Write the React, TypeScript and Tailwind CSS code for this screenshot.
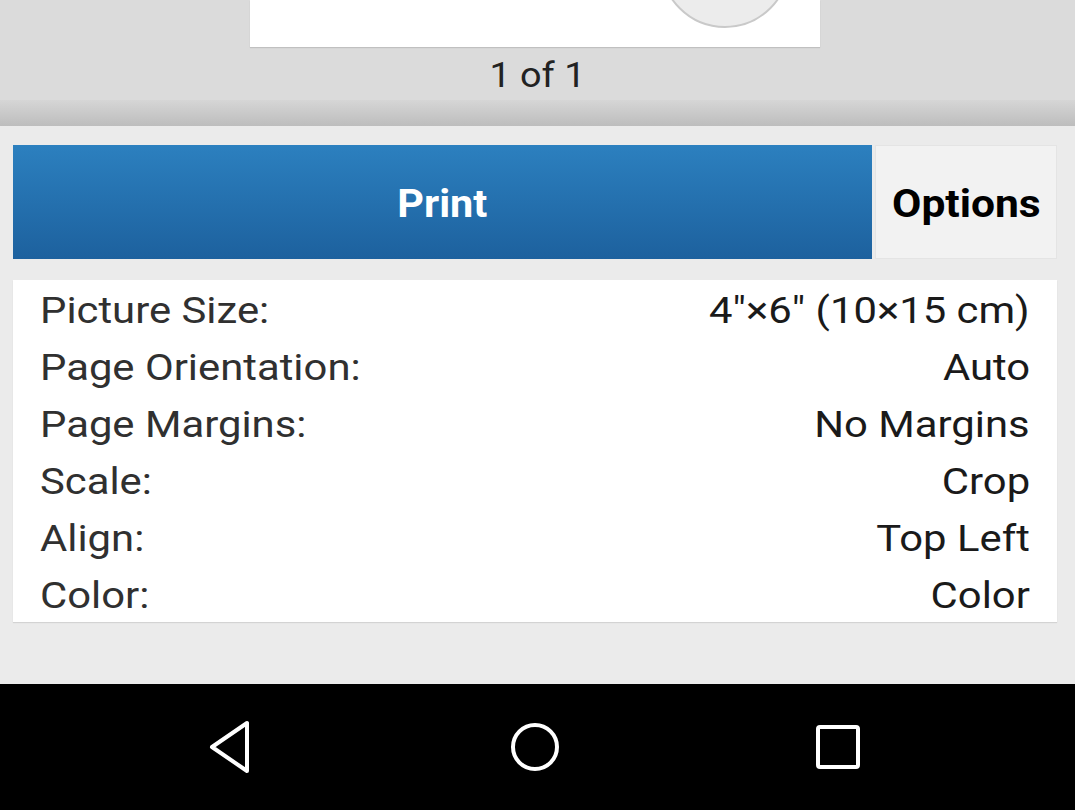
import React from "react";

const rows: [string, string][] = [
  ["Picture Size:", '4"×6" (10×15 cm)'],
  ["Page Orientation:", "Auto"],
  ["Page Margins:", "No Margins"],
  ["Scale:", "Crop"],
  ["Align:", "Top Left"],
  ["Color:", "Color"],
];

export default function App() {
  return (
    <div
      className="w-[1075px] h-[810px] overflow-hidden flex flex-col bg-[#ebebeb]"
      style={{ fontFamily: "Roboto, 'Liberation Sans', sans-serif" }}
    >
      {/* Preview area */}
      <div className="h-[100px] bg-[#dbdbdb] flex flex-col items-center shrink-0">
        <div className="relative w-[570px] h-[47px] bg-white overflow-hidden shadow-[0_1px_1px_rgba(0,0,0,0.12)] ml-[-5px]">
          <div className="absolute left-[410px] top-[-102px] w-[130px] h-[130px] rounded-full bg-[#ececec] border-2 border-[#c9c9c9]" />
        </div>
        <div className="mt-[9px] text-[35px] leading-[40px] text-[#222] scale-x-[1.08]">1 of 1</div>
      </div>
      <div className="h-[26px] shrink-0 bg-gradient-to-b from-[#d6d6d6] to-[#bdbdbd]" />

      {/* Buttons */}
      <div className="flex pl-[13px] pr-[18px] pt-[19px] h-[134px] shrink-0 gap-[3px]">
        <div className="w-[859px] h-[114px] flex items-center justify-center pt-[4px] bg-gradient-to-b from-[#2c80bf] to-[#1d619e] text-white font-bold text-[38px]">
          <span className="inline-block scale-x-[1.09]">Print</span>
        </div>
        <div className="flex-1 h-[114px] flex items-center justify-center pt-[4px] bg-[#f2f2f2] border border-[#e4e4e4] text-black font-bold text-[38px]">
          <span className="inline-block scale-x-[1.12]">Options</span>
        </div>
      </div>

      {/* Info card */}
      <div className="ml-[13px] mr-[18px] mt-[20px] bg-white px-[27px] pt-[2px] h-[342px] shrink-0 shadow-[0_1px_1px_rgba(0,0,0,0.1)]">
        {rows.map(([k, v]) => (
          <div key={k} className="flex justify-between h-[57px] items-center text-[37px] text-[#303030]">
            <span className="inline-block origin-left scale-x-[1.13]">{k}</span>
            <span className="inline-block origin-right scale-x-[1.13] text-[#1a1a1a]">{v}</span>
          </div>
        ))}
      </div>

      <div className="flex-1" />

      {/* Nav bar */}
      <div className="h-[126px] shrink-0 bg-black flex items-center justify-center">
        <div className="flex items-center ml-[-6px]">
          <div className="w-[303px] flex justify-center">
            <svg width="48" height="56" viewBox="0 0 48 56" className="ml-[-2px]">
              <path d="M40 4 L40 52 L5 28 Z" fill="none" stroke="white" strokeWidth="4" strokeLinejoin="round" />
            </svg>
          </div>
          <div className="w-[303px] flex justify-center">
            <svg width="52" height="52" viewBox="0 0 52 52">
              <circle cx="26" cy="26" r="22" fill="none" stroke="white" strokeWidth="4" />
            </svg>
          </div>
          <div className="w-[303px] flex justify-center">
            <svg width="46" height="46" viewBox="0 0 46 46">
              <rect x="3" y="3" width="40" height="40" rx="2" fill="none" stroke="white" strokeWidth="4" />
            </svg>
          </div>
        </div>
      </div>
    </div>
  );
}
